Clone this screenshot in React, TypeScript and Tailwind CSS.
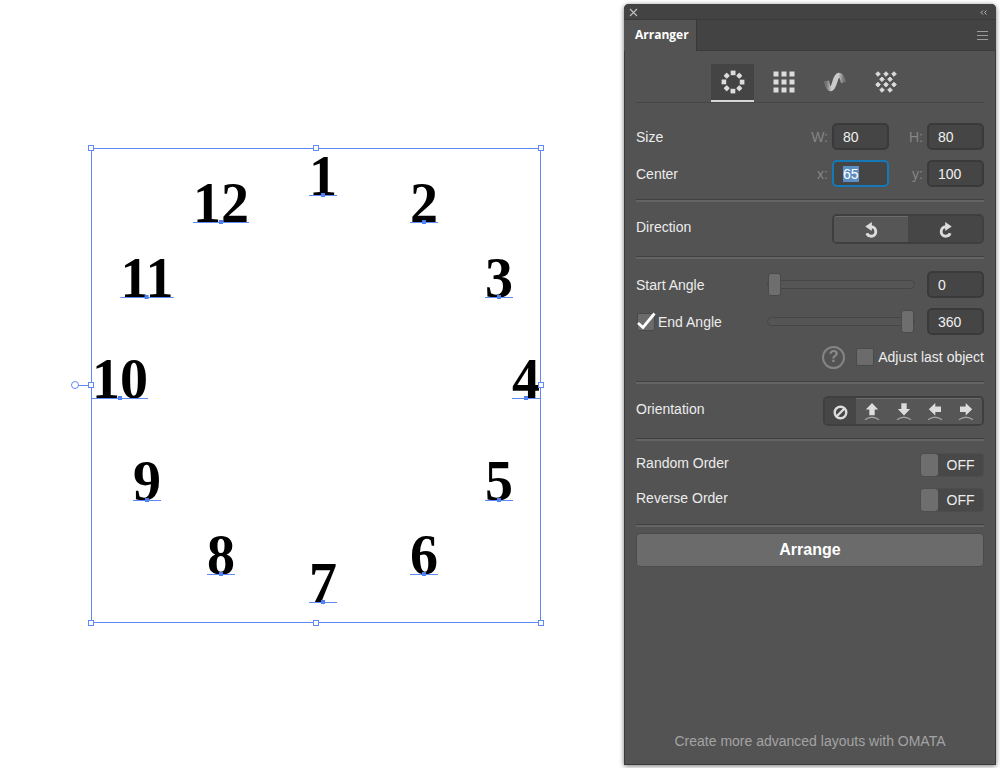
import React, { useEffect, useRef, useState } from 'react';
import clsx from 'clsx';

// Baseline anchor of every numeral, relative to the selection box
const numerals = [
  { label: '1', x: 232, y: 47 },
  { label: '2', x: 333, y: 74 },
  { label: '3', x: 408, y: 149 },
  { label: '4', x: 435, y: 250 },
  { label: '5', x: 408, y: 352 },
  { label: '6', x: 333, y: 426 },
  { label: '7', x: 232, y: 454 },
  { label: '8', x: 130, y: 426 },
  { label: '9', x: 56, y: 352 },
  { label: '10', x: 29, y: 250 },
  { label: '11', x: 56, y: 149 },
  { label: '12', x: 130, y: 74 },
];

const handles = [
  { x: 0, y: 0 },
  { x: 225, y: 0 },
  { x: 450, y: 0 },
  { x: 0, y: 237 },
  { x: 450, y: 237 },
  { x: 0, y: 475 },
  { x: 225, y: 475 },
  { x: 450, y: 475 },
];

function Artboard() {
  return (
    <div className="relative w-[450px] h-[475px] shrink-0 outline outline-[#5f8af5] -outline-offset-1">
      {numerals.map((n) => (
        <div
          key={n.label}
          className="absolute h-14 -translate-x-1/2 border-b border-[#5f8af5]"
          style={{ left: n.x, top: n.y - 55 }}
        >
          <span className="block font-['Liberation_Serif',serif] font-bold text-[56px] leading-[72px] text-black">
            {n.label}
          </span>
          <span className="absolute left-1/2 -bottom-[2px] w-[4px] h-[4px] -translate-x-1/2 bg-[#4a7df0]" />
          <span className="absolute inset-x-0 -bottom-px h-px bg-[#5f8af5]" />
        </div>
      ))}
      {handles.map((h) => (
        <span
          key={`${h.x}-${h.y}`}
          className="absolute w-[6px] h-[6px] -mt-[3px] -ml-[3px] bg-white border border-[#5f8af5]"
          style={{ left: h.x, top: h.y }}
        />
      ))}
      <span className="absolute -left-[13px] top-[237px] w-[10px] h-px bg-[#5f8af5]" />
      <span className="absolute -left-[20px] top-[233px] w-[8px] h-[8px] rounded-full bg-white border border-[#5f8af5]" />
    </div>
  );
}

function RingIcon() {
  return (
    <svg width="24" height="24" viewBox="0 0 24 24" fill="#dcdcdc">
      {[0, 90, 180, 270].map((a) => (
        <rect key={a} x="9.7" y="0.6" width="4.8" height="4.6" transform={`rotate(${a} 12 12)`} />
      ))}
      {[45, 135, 225, 315].map((a) => (
        <rect key={a} x="9.8" y="0.9" width="4.4" height="4.4" rx="0.6" transform={`rotate(${a} 12 12)`} />
      ))}
    </svg>
  );
}

function GridIcon() {
  return (
    <svg width="24" height="24" viewBox="0 0 24 24" fill="#dcdcdc">
      {[2, 10, 18].map((y) =>
        [2, 10, 18].map((x) => <rect key={`${x}-${y}`} x={x - 0.5} y={y - 0.5} width="5" height="5" />)
      )}
    </svg>
  );
}

function WaveIcon() {
  return (
    <svg width="24" height="24" viewBox="0 0 24 24" fill="none">
      <defs>
        <linearGradient id="wave" x1="0" x2="1" y1="0" y2="0">
          <stop offset="0" stopColor="#757575" />
          <stop offset="0.3" stopColor="#cacaca" />
          <stop offset="0.7" stopColor="#cacaca" />
          <stop offset="1" stopColor="#757575" />
        </linearGradient>
      </defs>
      <path
        d="M3.500 11C4.500 15.500 5.500 19 8 18.700C11.800 18 11.700 6 15.700 5.300C18.300 5 19.300 8 20.500 12.500"
        stroke="url(#wave)"
        strokeWidth="5"
      />
    </svg>
  );
}

function ScatterIcon() {
  const dots = [
    [4, 4], [12, 4], [20, 4],
    [8, 9.3], [16, 9.3],
    [4, 14.6], [12, 14.6], [20, 14.6],
    [8, 20], [16, 20],
  ];
  return (
    <svg width="24" height="24" viewBox="0 0 24 24" fill="#dcdcdc" stroke="#dcdcdc" strokeLinejoin="round">
      {dots.map(([x, y]) => (
        <path key={`${x}-${y}`} d={`M${x} ${y - 2.3}l2.300 2.300l-2.300 2.300l-2.300 -2.300z`} />
      ))}
    </svg>
  );
}

function TurnIcon({ flip }: { flip?: boolean }) {
  return (
    <svg width="13" height="16" viewBox="0 0 13 16" className={clsx(flip && '-scale-x-100')}>
      <path d="M0.300 4.500L6.800 0V9Z" fill="#dcdcdc" />
      <path
        d="M6 4.800C9 4.800 10.800 7.100 10.800 9.700C10.800 12.300 8.800 14.200 6.300 14.200C4.300 14.200 2.600 13.200 1.900 11.300"
        fill="none"
        stroke="#dcdcdc"
        strokeWidth="2.900"
      />
    </svg>
  );
}

function ArrowIcon({ angle }: { angle: number }) {
  return (
    <svg width="16" height="18" viewBox="0 0 16 18">
      <path
        d="M8 0L14.200 6.500H10.700V12.200H5.300V6.500H1.800Z"
        fill="#dcdcdc"
        transform={`rotate(${angle} 8 6.200)`}
      />
      <path d="M1 16.800Q8 11.800 15 16.800" fill="none" stroke="#a0a0a0" strokeWidth="1.400" />
    </svg>
  );
}

function NoneIcon() {
  return (
    <svg width="16" height="16" viewBox="0 0 16 16" fill="none" stroke="#dcdcdc" strokeWidth="2.400">
      <circle cx="7.500" cy="8.500" r="5.800" />
      <path d="M3.500 12.500L11.500 4.500" />
    </svg>
  );
}

function Divider() {
  return <hr className="h-[3px] border-t border-b-2 border-t-[#404040] border-b-[#646464]" />;
}

interface NumberFieldProps {
  label: string;
  defaultValue: string;
  showLabel?: boolean;
  active?: boolean;
}

function NumberField({ label, defaultValue, showLabel, active }: NumberFieldProps) {
  const ref = useRef<HTMLInputElement>(null);

  useEffect(() => {
    if (active) {
      ref.current?.focus();
      ref.current?.select();
    }
  }, [active]);

  return (
    <label className="flex items-center gap-1">
      {showLabel && <span className="w-[17px] text-right text-[#858585]">{label}</span>}
      <input
        ref={ref}
        type="text"
        aria-label={label}
        defaultValue={defaultValue}
        className="w-[57px] h-[27px] pl-[9px] rounded-[5px] bg-[#454545] border-2 border-[#3a3a3a] text-[#f0f0f0] outline-none focus:border-[#1579b8] selection:bg-[#5c8fc4] selection:text-white"
      />
    </label>
  );
}

function Slider({ label, defaultValue }: { label: string; defaultValue: number }) {
  return (
    <input
      type="range"
      aria-label={label}
      min={0}
      max={360}
      defaultValue={defaultValue}
      className="w-[148px] h-[9px] ml-auto mr-3 appearance-none rounded-full bg-[#555555] border border-[#464646] [&::-webkit-slider-thumb]:appearance-none [&::-webkit-slider-thumb]:w-[13px] [&::-webkit-slider-thumb]:h-[23px] [&::-webkit-slider-thumb]:rounded-[3px] [&::-webkit-slider-thumb]:bg-[#6e6e6e] [&::-webkit-slider-thumb]:border [&::-webkit-slider-thumb]:border-[#4a4a4a]"
    />
  );
}

function Toggle({ label }: { label: string }) {
  const [on, setOn] = useState(false);
  return (
    <div className="flex items-center justify-between h-6">
      <span className="pb-1">{label}</span>
      <button
        type="button"
        role="switch"
        aria-checked={on}
        aria-label={label}
        onClick={() => setOn(!on)}
        className={clsx(
          'flex items-center w-16 h-6 rounded-[4px] bg-[#484848] border border-[#4d4d4d]',
          on && 'flex-row-reverse'
        )}
      >
        <span className="w-[17px] h-[22px] rounded-[3px] bg-[#6e6e6e]" />
        <span className="flex-1 text-center">{on ? 'ON' : 'OFF'}</span>
      </button>
    </div>
  );
}

const modes = [
  { name: 'Ring', icon: <RingIcon /> },
  { name: 'Grid', icon: <GridIcon /> },
  { name: 'Path', icon: <WaveIcon /> },
  { name: 'Scatter', icon: <ScatterIcon /> },
];

const orientations = [
  { name: 'None', icon: <NoneIcon /> },
  { name: 'Outward', icon: <ArrowIcon angle={0} /> },
  { name: 'Inward', icon: <ArrowIcon angle={180} /> },
  { name: 'Left', icon: <ArrowIcon angle={270} /> },
  { name: 'Right', icon: <ArrowIcon angle={90} /> },
];

export default function App() {
  const [mode, setMode] = useState('Ring');
  const [direction, setDirection] = useState('cw');
  const [orientation, setOrientation] = useState('None');

  return (
    <div className="flex min-h-screen bg-white font-['Liberation_Sans',Arial,sans-serif] text-sm text-[#ececec]">
      <main className="flex flex-1 items-center justify-center pl-2 pt-[3px]">
        <Artboard />
      </main>

      <aside className="flex flex-col w-[372px] shrink-0 mt-1 mr-1 mb-[3px] rounded-t-[5px] bg-[#535353] shadow-[0_0_0_1px_#3a3a3a_inset,0_1px_5px_rgba(0,0,0,0.55)]">
        <div className="flex items-center justify-between h-4 px-[5px] pt-px rounded-t-[5px] bg-[#434343] border-b border-[#383838]">
          <button type="button" aria-label="Close">
            <svg width="9" height="9" viewBox="0 0 9 9" stroke="#bdbdbd" strokeWidth="1.200">
              <path d="M1 1L8 8M8 1L1 8" />
            </svg>
          </button>
          <button type="button" aria-label="Collapse" className="pr-1">
            <svg width="7" height="5" viewBox="0 0 7 5" fill="none" stroke="#bdbdbd">
              <path d="M3 0.500L1 2.500L3 4.500M6.500 0.500L4.500 2.500L6.500 4.500" />
            </svg>
          </button>
        </div>

        <div className="flex justify-between h-[31px] bg-[#434343]">
          <h1 className="flex items-center w-[73px] pl-[11px] pb-[2px] bg-[#535353] border-r border-[#383838] font-['Open_Sans',sans-serif] font-bold text-xs text-white">
            Arranger
          </h1>
          <div className="flex flex-1 items-center justify-end pr-2 border-b border-[#3c3c3c]">
            <button type="button" aria-label="Panel menu">
              <svg width="11" height="9" viewBox="0 0 11 9" fill="#9c9c9c">
                <path d="M0 0H11V1H0ZM0 4H11V5H0ZM0 8H11V9H0Z" />
              </svg>
            </button>
          </div>
        </div>

        <div className="flex flex-col flex-1 px-3">
          <nav className="flex justify-center gap-2 pt-[13px] pr-[2px] border-b border-[#464646]">
            {modes.map((m) => (
              <button
                key={m.name}
                type="button"
                aria-label={m.name}
                onClick={() => setMode(m.name)}
                className={clsx(
                  'flex items-center justify-center w-[43px] h-[38px] border-b-2',
                  mode === m.name ? 'bg-[#444444] border-[#d6d6d6]' : 'border-transparent'
                )}
              >
                {m.icon}
              </button>
            ))}
          </nav>

          <section className="flex flex-col gap-[10px] pt-5 pb-3">
            <div className="flex items-center justify-between">
              <span>Size</span>
              <div className="flex gap-[17px]">
                <NumberField label="W:" defaultValue="80" showLabel />
                <NumberField label="H:" defaultValue="80" showLabel />
              </div>
            </div>
            <div className="flex items-center justify-between">
              <span>Center</span>
              <div className="flex gap-[17px]">
                <NumberField label="x:" defaultValue="65" showLabel active />
                <NumberField label="y:" defaultValue="100" showLabel />
              </div>
            </div>
          </section>
          <Divider />

          <section className="flex items-center justify-between py-3">
            <span className="pb-1">Direction</span>
            <div className="flex w-[152px] h-[30px] rounded-[5px] border-2 border-[#3f3f3f] overflow-hidden">
              {['ccw', 'cw'].map((d) => (
                <button
                  key={d}
                  type="button"
                  aria-label={d === 'cw' ? 'Clockwise' : 'Counterclockwise'}
                  onClick={() => setDirection(d)}
                  className={clsx(
                    'flex flex-1 items-center justify-center border-t',
                    direction === d ? 'bg-[#464646] border-[#464646]' : 'bg-[#565656] border-[#6c6c6c]'
                  )}
                >
                  <TurnIcon flip={d === 'cw'} />
                </button>
              ))}
            </div>
          </section>
          <Divider />

          <section className="flex flex-col gap-[10px] py-3">
            <div className="flex items-center">
              <span>Start Angle</span>
              <Slider label="Start Angle" defaultValue={0} />
              <NumberField label="Start Angle value" defaultValue="0" />
            </div>
            <div className="flex items-center">
              <label className="flex items-center gap-[3px]">
                <span className="relative flex">
                  <input
                    type="checkbox"
                    defaultChecked
                    className="peer appearance-none w-[18px] h-[18px] ml-px rounded-[2px] bg-[#6b6b6b] border border-[#4a4a4a]"
                  />
                  <svg
                    className="absolute left-0 -top-px hidden peer-checked:block pointer-events-none"
                    width="20"
                    height="18"
                    viewBox="0 0 20 18"
                    fill="none"
                    stroke="#ffffff"
                    strokeWidth="2.800"
                  >
                    <path d="M2 11L7 15.500L18.500 1.500" />
                  </svg>
                </span>
                End Angle
              </label>
              <Slider label="End Angle" defaultValue={360} />
              <NumberField label="End Angle value" defaultValue="360" />
            </div>
            <div className="flex items-center justify-end h-6">
              <button
                type="button"
                className="flex items-center justify-center w-[23px] h-[23px] mr-[11px] rounded-full border-2 border-[#828486] font-bold text-base text-[#8a8a8a]"
              >
                ?
              </button>
              <label className="flex items-center gap-1">
                <input
                  type="checkbox"
                  className="appearance-none w-[18px] h-[18px] rounded-[2px] bg-[#6b6b6b] border border-[#4a4a4a] checked:bg-[#dcdcdc]"
                />
                Adjust last object
              </label>
            </div>
          </section>
          <Divider />

          <section className="flex items-center justify-between py-3">
            <span className="pb-1">Orientation</span>
            <div className="flex w-[161px] h-[30px] rounded-[5px] border-2 border-[#3f3f3f] overflow-hidden">
              {orientations.map((o) => (
                <button
                  key={o.name}
                  type="button"
                  aria-label={o.name}
                  onClick={() => setOrientation(o.name)}
                  className={clsx(
                    'flex flex-1 items-center justify-center border-t',
                    orientation === o.name ? 'bg-[#464646] border-[#464646]' : 'bg-[#565656] border-[#6c6c6c]'
                  )}
                >
                  {o.icon}
                </button>
              ))}
            </div>
          </section>
          <Divider />

          <section className="flex flex-col gap-[11px] py-3">
            <Toggle label="Random Order" />
            <Toggle label="Reverse Order" />
          </section>
          <Divider />

          <button
            type="button"
            className="h-[34px] mt-[6px] rounded-[4px] bg-[#6b6b6b] border border-[#4a4a4a] font-bold text-base text-white"
          >
            Arrange
          </button>

          <a href="#omata" className="mt-auto pb-[14px] text-center text-[#a3a3a3]">
            Create more advanced layouts with OMATA
          </a>
        </div>
      </aside>
    </div>
  );
}
